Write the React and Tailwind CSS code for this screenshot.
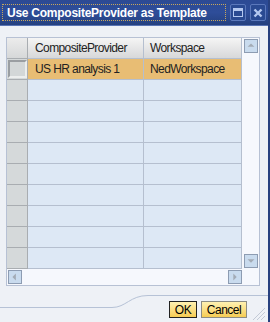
import React from 'react'

const rows = [
  { provider: 'US HR analysis 1', workspace: 'NedWorkspace', selected: true },
  ...Array.from({ length: 9 }, () => ({ provider: '', workspace: '' })),
]

function ScrollButton({ dir, className = '' }) {
  const pts = {
    up: '3,8 7,4 11,8',
    down: '3,5 7,9 11,5',
    left: '8,3 4,7 8,11',
    right: '5,3 9,7 5,11',
  }[dir]
  return (
    <div className={`w-[14px] h-[14px] border border-[#8d9cb2] bg-[#c9dbee] flex items-center justify-center ${className}`}>
      <svg width="12" height="12" viewBox="0 0 14 14">
        <polygon points={pts} fill="#a3abb5" />
      </svg>
    </div>
  )
}

export default function App() {
  return (
    <div className="w-[270px] h-[322px] flex flex-col bg-[#eef1f6] border-r-2 border-[#28417f] font-['Liberation_Sans',Arial,sans-serif] overflow-hidden">
      {/* Title bar */}
      <div className="h-[26px] shrink-0 flex items-center pl-[2px] pr-[2px] bg-gradient-to-b from-[#2c4a94] via-[#2e4d99] to-[#24407f] border-b border-[#5873b4]">
        <div className="h-[17px] w-[224px] border border-dotted border-[#c8a85c] flex items-center pl-[4px]">
          <span className="text-white font-bold text-[12px] tracking-[-0.25px] leading-none">Use CompositeProvider as Template</span>
        </div>
        <div className="ml-auto flex gap-[4px] items-center">
          <div className="w-[16px] h-[17px] rounded-[2px] border border-[#5b78bb] bg-[#2a4a92] flex items-center justify-center">
            <div className="w-[10px] h-[9px] border border-[#b4c8f0] border-t-[3px]" />
          </div>
          <div className="w-[16px] h-[17px] rounded-[2px] border border-[#5b78bb] bg-[#2a4a92] flex items-center justify-center">
            <svg width="10" height="10" viewBox="0 0 10 10">
              <path d="M1.5 1.5 L8.5 8.5 M8.5 1.5 L1.5 8.5" stroke="#b4c8f0" strokeWidth="2.4" />
            </svg>
          </div>
        </div>
      </div>

      {/* Body */}
      <div className="pt-[11px] pl-[6px]">
        <div className="w-[254px] h-[249px] border border-[#b7c1d4] bg-[#f6f8fd] flex flex-col">
          <div className="flex h-[231px]">
            {/* Grid */}
            <div className="w-[235px] flex flex-col text-[12px] tracking-[-0.6px] text-[#222]">
              <div className="flex h-[21px]">
                <div className="w-[21px] border-r border-b border-[#a9adb1] bg-gradient-to-b from-[#ececec] to-[#d6d8d9]" />
                <div className="w-[116px] border-r border-b border-[#b5bfcf] bg-gradient-to-b from-[#f5f5f5] to-[#d7d8d9] flex items-center pl-[7px]">CompositeProvider</div>
                <div className="w-[98px] border-r border-b border-[#b5bfcf] bg-gradient-to-b from-[#f5f5f5] to-[#d7d8d9] flex items-center pl-[6px]">Workspace</div>
              </div>
              {rows.map((r, i) => (
                <div key={i} className="flex h-[21px]">
                  <div className="w-[21px] border-r border-b border-[#a9adb1] bg-[#d5d9da] flex items-center justify-center">
                    {r.selected && <div className="w-[19px] h-[18px] border-2 border-t-[#9a9ea2] border-l-[#9a9ea2] border-r-[#eceeee] border-b-[#eceeee] bg-[#d3d7d8]" />}
                  </div>
                  <div className={`w-[116px] border-r border-b border-[#b5bfcf] flex items-center pl-[7px] ${r.selected ? 'bg-[#e8bd74]' : 'bg-[#dde8f5]'}`}>{r.provider}</div>
                  <div className={`w-[98px] border-r border-b border-[#b5bfcf] flex items-center pl-[6px] ${r.selected ? 'bg-[#e8bd74]' : 'bg-[#dde8f5]'}`}>{r.workspace}</div>
                </div>
              ))}
            </div>
            {/* Vertical scrollbar */}
            <div className="flex-1 flex flex-col items-center pt-[1px] pb-[1px] pl-[1px]">
              <ScrollButton dir="up" />
              <ScrollButton dir="down" className="mt-auto" />
            </div>
          </div>
          {/* Horizontal scrollbar */}
          <div className="h-[16px] w-[235px] flex items-center pl-[1px]">
            <ScrollButton dir="left" />
            <ScrollButton dir="right" className="ml-auto" />
          </div>
        </div>
      </div>

      {/* Footer */}
      <div className="relative flex-1">
        <svg className="absolute left-0 top-0" width="268" height="35" viewBox="0 0 268 35">
          <path d="M0 21.5 H112 C126 21.5 130 9.5 148 9.5 H268" fill="none" stroke="#b6c2d6" strokeWidth="1" />
        </svg>
        <div className="absolute left-[169px] top-[15px] flex gap-[4px] text-[12px] tracking-[-0.5px] text-black">
          <div className="w-[28px] h-[17px] border border-[#222] bg-gradient-to-b from-[#fff1b0] to-[#f6cc52] flex items-center justify-center leading-none">OK</div>
          <div className="w-[46px] h-[17px] border border-[#8c8c84] bg-gradient-to-b from-[#fff1b0] to-[#f6cc52] flex items-center justify-center leading-none">Cancel</div>
        </div>
        <svg className="absolute right-[2px] bottom-[1px]" width="16" height="16" viewBox="0 0 16 16">
          <path d="M15 3 L3 15 M15 7 L7 15 M15 11 L11 15" stroke="#c3cad6" strokeWidth="1" />
        </svg>
      </div>
    </div>
  )
}
